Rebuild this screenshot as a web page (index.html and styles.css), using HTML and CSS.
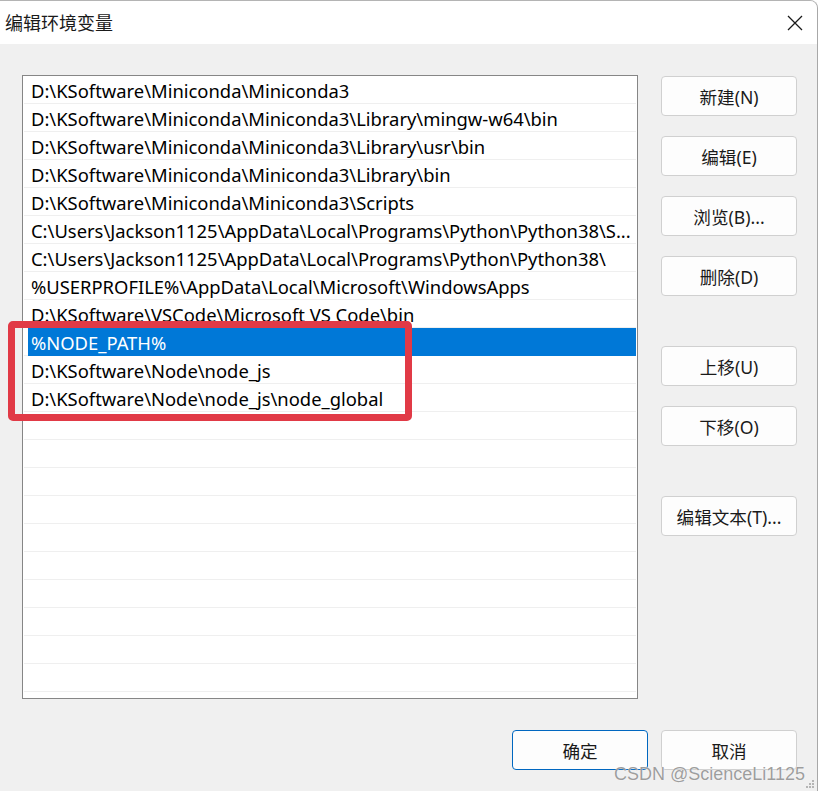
FILE: index.html
```html
<!DOCTYPE html>
<html lang="zh-CN">
<head>
    <meta charset="UTF-8">
    <meta name="viewport" content="width=device-width, initial-scale=1.0">
    <title>编辑环境变量</title>
    <link rel="stylesheet" href="styles.css">
</head>
<body>
    <div class="window">
        <div class="titlebar">
            <span class="title">编辑环境变量</span>
            <span class="close">
                <svg width="16" height="16" viewBox="0 0 16 16">
                    <path d="M1 1 L15 15 M15 1 L1 15" stroke="#1a1a1a" stroke-width="1.3" fill="none"/>
                </svg>
            </span>
        </div>

        <div class="content">
            <div class="main">
                <div class="listbox">
                    <div class="row"><div class="cell">D:\KSoftware\Miniconda\Miniconda3</div></div>
                    <div class="row"><div class="cell">D:\KSoftware\Miniconda\Miniconda3\Library\mingw-w64\bin</div></div>
                    <div class="row"><div class="cell">D:\KSoftware\Miniconda\Miniconda3\Library\usr\bin</div></div>
                    <div class="row"><div class="cell">D:\KSoftware\Miniconda\Miniconda3\Library\bin</div></div>
                    <div class="row"><div class="cell">D:\KSoftware\Miniconda\Miniconda3\Scripts</div></div>
                    <div class="row"><div class="cell">C:\Users\Jackson1125\AppData\Local\Programs\Python\Python38\S...</div></div>
                    <div class="row"><div class="cell">C:\Users\Jackson1125\AppData\Local\Programs\Python\Python38\</div></div>
                    <div class="row"><div class="cell">%USERPROFILE%\AppData\Local\Microsoft\WindowsApps</div></div>
                    <div class="row"><div class="cell">D:\KSoftware\VSCode\Microsoft VS Code\bin</div></div>
                    <div class="row"><div class="cell selected">%NODE_PATH%</div></div>
                    <div class="row"><div class="cell">D:\KSoftware\Node\node_js</div></div>
                    <div class="row"><div class="cell">D:\KSoftware\Node\node_js\node_global</div></div>
                    <div class="row"><div class="cell"></div></div>
                    <div class="row"><div class="cell"></div></div>
                    <div class="row"><div class="cell"></div></div>
                    <div class="row"><div class="cell"></div></div>
                    <div class="row"><div class="cell"></div></div>
                    <div class="row"><div class="cell"></div></div>
                    <div class="row"><div class="cell"></div></div>
                    <div class="row"><div class="cell"></div></div>
                    <div class="row"><div class="cell"></div></div>
                    <div class="row"><div class="cell"></div></div>
                    <div class="row"><div class="cell"></div></div>
                </div>

                <div class="side">
                    <button class="btn">新建(N)</button>
                    <button class="btn">编辑(E)</button>
                    <button class="btn">浏览(B)...</button>
                    <button class="btn">删除(D)</button>
                    <button class="btn gap-lg">上移(U)</button>
                    <button class="btn">下移(O)</button>
                    <button class="btn gap-lg">编辑文本(T)...</button>
                </div>
            </div>

            <div class="footer">
                <button class="btn primary">确定</button>
                <button class="btn">取消</button>
            </div>
        </div>

        <div class="highlight"></div>
        <div class="watermark">CSDN @ScienceLi1125</div>
        <svg class="grip" width="8" height="8" viewBox="0 0 8 8">
            <rect x="6" y="0" width="2" height="2" fill="#b5b5b5"/>
            <rect x="3" y="3" width="2" height="2" fill="#b5b5b5"/>
            <rect x="6" y="3" width="2" height="2" fill="#b5b5b5"/>
            <rect x="0" y="6" width="2" height="2" fill="#b5b5b5"/>
            <rect x="3" y="6" width="2" height="2" fill="#b5b5b5"/>
            <rect x="6" y="6" width="2" height="2" fill="#b5b5b5"/>
        </svg>
    </div>
</body>
</html>
```

FILE: styles.css
```css
* {
    margin: 0;
    padding: 0;
    box-sizing: border-box;
}

body {
    font-family: "Noto Sans", "Noto Sans CJK SC", sans-serif;
    background: #ffffff;
    width: 821px;
    height: 791px;
    overflow: hidden;
}

.window {
    position: relative;
    width: 818px;
    height: 791px;
    background: #f0f0f0;
    border-top: 1px solid #b4b4b4;
    border-right: 1px solid #a8a8a8;
    border-top-right-radius: 8px;
    overflow: hidden;
}

.titlebar {
    height: 43px;
    background: #ffffff;
    display: flex;
    align-items: center;
    justify-content: space-between;
    padding-left: 5px;
    padding-right: 14px;
}

.title {
    font-family: "Noto Sans CJK SC", sans-serif;
    font-size: 18px;
    color: #1a1a1a;
    margin-top: -1px;
}

.close {
    display: flex;
    margin-top: 1px;
}

.content {
    padding: 31px 0 0 22px;
}

.main {
    display: flex;
    gap: 23px;
}

.listbox {
    width: 616px;
    height: 624px;
    background: #ffffff;
    border: 1px solid #868686;
    padding: 0 1px;
    overflow: hidden;
}

.row {
    height: 28px;
    padding-left: 4px;
    border-bottom: 1px solid #efefef;
}

.cell {
    height: 28px;
    padding: 2px 4px 0 3px;
    font-size: 18.4px;
    line-height: 26px;
    color: #000000;
    white-space: nowrap;
    overflow: hidden;
}

.cell.selected {
    background: #0078d7;
    color: #ffffff;
}

.side {
    display: flex;
    flex-direction: column;
    gap: 20px;
    padding-top: 1px;
}

.btn {
    width: 136px;
    height: 40px;
    background: #fdfdfd;
    border: 1px solid #d0d0d0;
    border-radius: 4px;
    font-family: "Noto Sans", "Noto Sans CJK SC", sans-serif;
    font-size: 17.6px;
    color: #1a1a1a;
}

.side .gap-lg {
    margin-top: 30px;
}

.btn.primary {
    border-color: #0067c0;
}

.footer {
    display: flex;
    justify-content: flex-end;
    gap: 13px;
    margin-top: 31px;
    padding-right: 20px;
}

.highlight {
    position: absolute;
    left: 8px;
    top: 320px;
    width: 404px;
    height: 100px;
    border: 7px solid #e13a46;
    border-radius: 5px;
}

.watermark {
    position: absolute;
    right: 12px;
    top: 763px;
    font-family: "Liberation Sans", Arial, sans-serif;
    font-size: 18px;
    color: rgba(140, 140, 140, 0.85);
    text-shadow: 0 0 1px #ffffff;
}

.grip {
    position: absolute;
    right: 3px;
    bottom: 3px;
}
```
